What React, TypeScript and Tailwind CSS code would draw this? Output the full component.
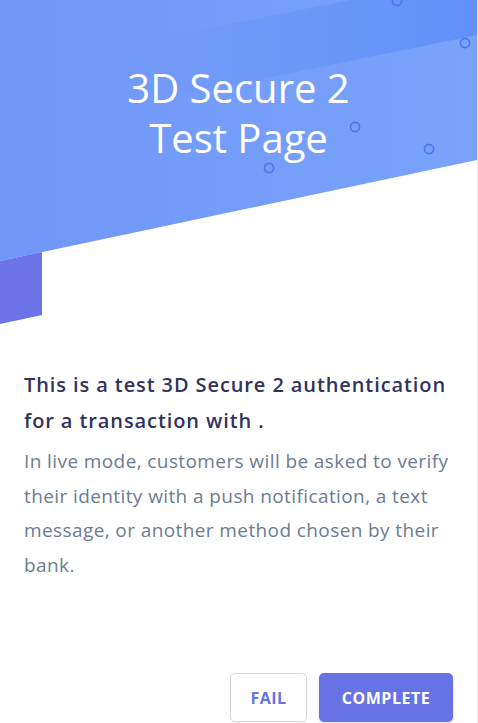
export default function App() {
  const circles = [
    [397, 1],
    [465, 43],
    [355, 127],
    [429, 149],
    [269, 168],
  ];

  return (
    <div className="relative flex h-[723px] w-[478px] flex-col overflow-hidden border-r border-[#ececf0] bg-white">
      {/* Header artwork */}
      <div className="relative h-[330px] shrink-0">
        <svg
          className="absolute inset-0"
          width="477"
          height="330"
          viewBox="0 0 477 330"
        >
          <defs>
            <linearGradient id="bg" x1="0" y1="0" x2="1" y2="0">
              <stop offset="0" stopColor="#7096f7" />
              <stop offset="1" stopColor="#79a3fb" />
            </linearGradient>
            <linearGradient id="band" x1="150" y1="0" x2="477" y2="0" gradientUnits="userSpaceOnUse">
              <stop offset="0" stopColor="#5c8cf7" stopOpacity="0" />
              <stop offset="0.35" stopColor="#5c8cf7" stopOpacity="0.3" />
              <stop offset="1" stopColor="#5b8df8" stopOpacity="0.8" />
            </linearGradient>
          </defs>
          <polygon points="0,0 477,0 477,160 0,261" fill="url(#bg)" />
          <polygon points="150,40 350,0 477,0 477,35 150,102" fill="url(#band)" />
          <polygon points="0,261 42,252 42,315 0,324" fill="#6b73e6" />
          {circles.map(([cx, cy], i) => (
            <circle
              key={i}
              cx={cx}
              cy={cy}
              r="4.6"
              fill="none"
              stroke="#4c73f4"
              strokeWidth="1.6"
            />
          ))}
        </svg>
        <h1 className="relative pt-[63px] text-center font-['Open_Sans',sans-serif] text-[40px] font-normal leading-[50px] text-white">
          3D Secure 2
          <br />
          Test Page
        </h1>
      </div>

      {/* Copy */}
      <div className="px-6 pt-[37px] font-['Open_Sans',sans-serif]">
        <h2 className="text-[20px] font-semibold leading-[36px] tracking-[0.9px] text-[#32325d]">
          This is a test 3D Secure 2 authentication for a transaction with .
        </h2>
        <p className="mt-[5px] text-[19px] leading-[34.7px] tracking-[0.4px] text-[#6b7c93]">
          In live mode, customers will be asked to verify their identity with a
          push notification, a text message, or another method chosen by their
          bank.
        </p>
      </div>

      {/* Actions */}
      <div className="mt-auto flex justify-end gap-3 pb-[1px] pr-[24px] font-['Open_Sans',sans-serif]">
        <button className="h-[49px] w-[77px] rounded-[5px] border border-[#d6d6dd] bg-white text-[16px] font-bold tracking-[0.5px] text-[#6772e5] shadow-[0_1px_2px_rgba(0,0,0,0.04)]">
          FAIL
        </button>
        <button className="h-[49px] w-[134px] rounded-[5px] bg-[#6772e5] text-[16px] font-bold tracking-[0.5px] text-white shadow-[0_1px_3px_rgba(50,50,93,0.15)]">
          COMPLETE
        </button>
      </div>
    </div>
  );
}
